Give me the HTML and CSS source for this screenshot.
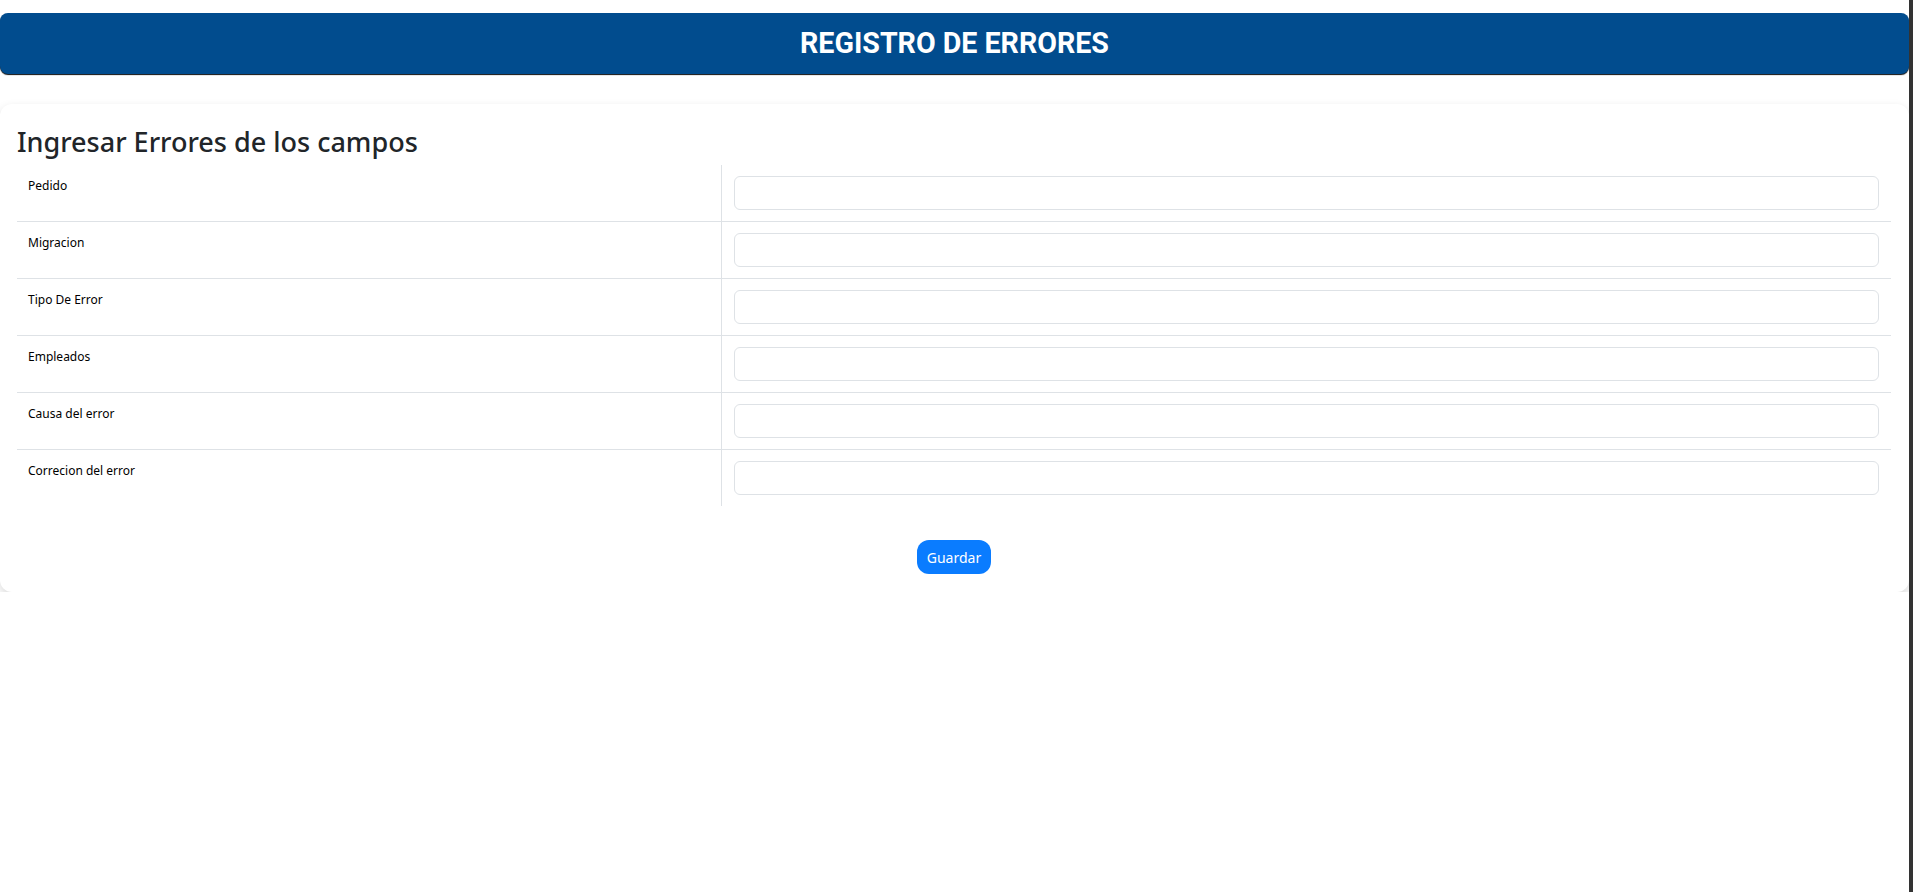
FILE: index.html
```html
<!DOCTYPE html>
<html lang="es">
<head>
<meta charset="utf-8">
<title>Registro de Errores</title>
<link rel="stylesheet" href="styles.css">
</head>
<body>
  <header class="topbar">
    <h1 class="topbar-title">REGISTRO DE ERRORES</h1>
  </header>
  <main class="card">
    <h2 class="card-title">Ingresar Errores de los campos</h2>
    <table class="form-table">
      <tbody>
        <tr><td class="label-cell">Pedido</td><td class="input-cell"><input class="field" type="text"></td></tr>
        <tr><td class="label-cell">Migracion</td><td class="input-cell"><input class="field" type="text"></td></tr>
        <tr><td class="label-cell">Tipo De Error</td><td class="input-cell"><input class="field" type="text"></td></tr>
        <tr><td class="label-cell">Empleados</td><td class="input-cell"><input class="field" type="text"></td></tr>
        <tr><td class="label-cell">Causa del error</td><td class="input-cell"><input class="field" type="text"></td></tr>
        <tr><td class="label-cell">Correcion del error</td><td class="input-cell"><input class="field" type="text"></td></tr>
      </tbody>
    </table>
    <div class="actions">
      <button class="btn-save" type="button">Guardar</button>
    </div>
  </main>
</body>
</html>
```
FILE: styles.css
```css
html {
  border-right: 4px solid #333333;
  min-height: 100%;
  box-sizing: border-box;
  background: #ffffff;
}
body {
  margin: 0;
  font-family: "Noto Sans", "Open Sans", sans-serif;
  color: #212529;
}
.topbar {
  margin-top: 13px;
  height: 61px;
  background: #014c8e;
  border-radius: 8px;
  box-shadow: 0 1px 1px rgba(0, 0, 0, 0.95);
  display: flex;
  align-items: center;
  justify-content: center;
}
.topbar-title {
  margin: 0;
  font-family: Roboto, "Liberation Sans", sans-serif;
  font-weight: 700;
  font-size: 28.6px;
  color: #ffffff;
  line-height: 1;
}
.card {
  display: block;
  margin-top: 30px;
  background: #ffffff;
  border-radius: 12px;
  box-shadow: 0 4px 10px rgba(0, 0, 0, 0.15);
  padding: 22px 18px 18px 17px;
}
.card-title {
  margin: 0 0 7px 0;
  font-size: 27px;
  font-weight: 500;
  line-height: 1.2;
  color: #212529;
}
.form-table {
  width: 100%;
  border-collapse: collapse;
}
.form-table tr + tr td {
  border-top: 1px solid #dee2e6;
}
.label-cell {
  width: 682px;
  padding: 11px;
  vertical-align: top;
  font-size: 12px;
  line-height: 20px;
  color: #000000;
  border-right: 1px solid #dee2e6;
}
.input-cell {
  padding: 11px 12px 11px 12px;
  vertical-align: top;
}
.field {
  display: block;
  box-sizing: border-box;
  width: 100%;
  height: 34px;
  border: 1px solid #dee2e6;
  border-radius: 6px;
  background: #ffffff;
  padding: 6px 12px;
  font-size: 14px;
}
.actions {
  display: flex;
  justify-content: center;
  margin-top: 34px;
}
.btn-save {
  width: 74px;
  height: 34px;
  border: none;
  border-radius: 12px;
  background: #0a7cff;
  color: #ffffff;
  font-family: "Noto Sans", "Open Sans", sans-serif;
  font-size: 14px;
  padding: 0;
}
```
